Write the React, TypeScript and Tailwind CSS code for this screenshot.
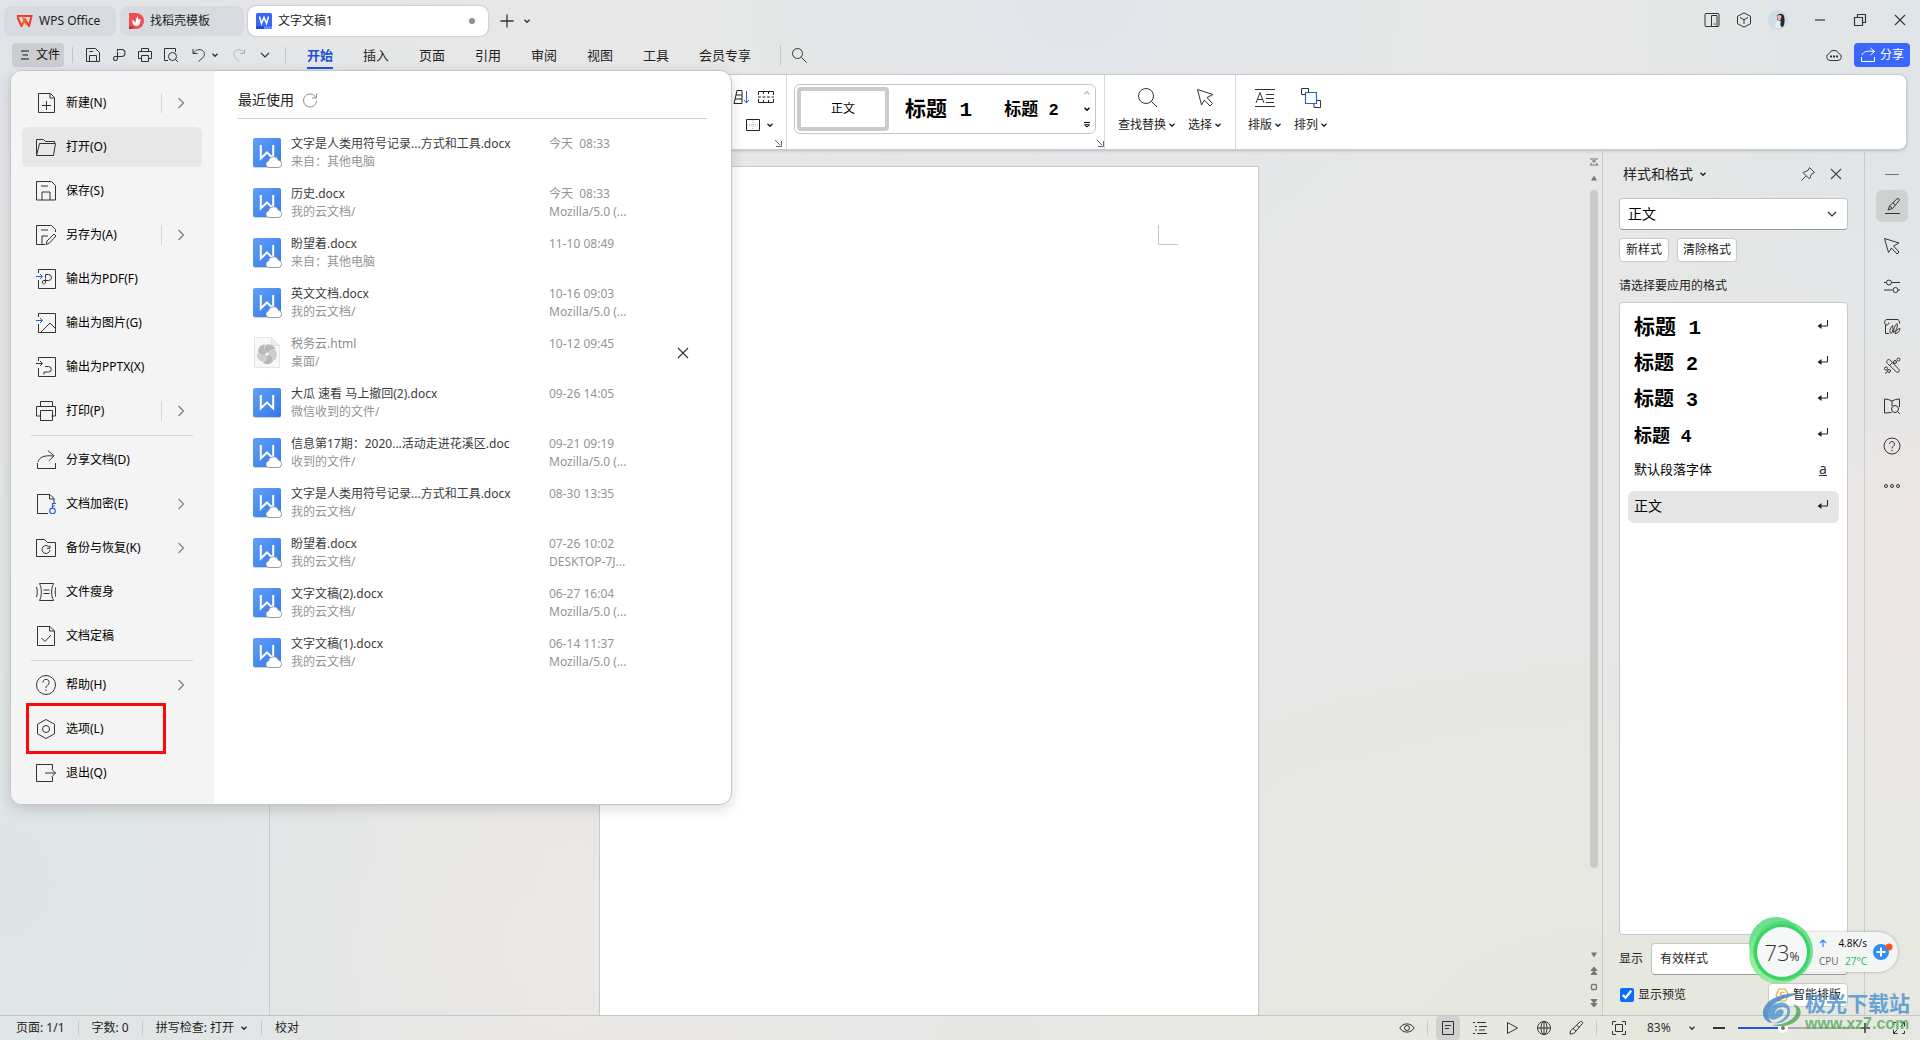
import type { ReactNode } from "react";
import clsx from "clsx";

function Ico({
  s = 20,
  className,
  children,
}: {
  s?: number;
  className?: string;
  children: ReactNode;
}) {
  return (
    <svg
      aria-hidden
      width={s}
      height={s}
      viewBox={`0 0 ${s} ${s}`}
      fill="none"
      stroke="currentColor"
      className={clsx("shrink-0", className)}
    >
      {children}
    </svg>
  );
}

const Caret = ({ className }: { className?: string }) => (
  <Ico s={8} className={className}>
    <path d="M1.5 2.8 4 5.2l2.5-2.4" strokeWidth="1.4" />
  </Ico>
);

const Close = () => (
  <Ico s={16}>
    <path d="m3 3 10 10M13 3 3 13" strokeWidth="1.1" />
  </Ico>
);

const icons = {
  newDoc: (
    <path d="M2.5.5h12l4 4v15h-16z M14 .5v4.5h4.5M10.5 8v9M6 12.5h9" />
  ),
  open: (
    <path d="M.5 18V2.5h7l2 2h9V7M3.5 6.5h16l-2 12h-17z" />
  ),
  save: <path d="M.5.5h15l4 4v14.500h-19zM5 5h7M6 19v-8h8v8" />,
  saveAs: (
    <path d="M9 19.500H.5V.5h15l4 4V7M5 5h7M6 19v-8h6M10 19.500l1-3.500 7-7 2 2-7 7.500z" />
  ),
  pdf: (
    <>
      <path d="M2.500 4V.5h17v19h-17V11" />
      <path d="M9.500 9.500v-4h3a3 3 0 0 1 0 6H8a1.700 1.700 0 1 0 1.500 2.500V10" />
      <path d="M0 7.500h6M4 5l2.500 2.500L4 10" stroke="#2a5de0" />
    </>
  ),
  picture: (
    <>
      <path d="M2.500 4V.5h17v19h-17V11M5 19l9-9 5.500 5.500" />
      <path d="M0 7.500h6M4 5l2.500 2.500L4 10" stroke="#2a5de0" />
    </>
  ),
  pptx: (
    <path d="M2.500 4V.5h17v19h-17V11M0 6.500h6M4 4l2.500 2.500L4 9M9 9.500h3.500a2.500 2.500 0 0 1 0 5.500H8v2.500" />
  ),
  print: (
    <path d="M4.500 5V.5h12V5M4.500 15H.5V5.500h19V15h-4M4.500 9.500h12v10h-12z" />
  ),
  share: <path d="M1.500 13v5.500h18V13M2 12c1-5 7-7 15-6M12 .8l6 5-5 5" />,
  encrypt: (
    <>
      <path d="M12 19.500H1.500V.5h12.500l4 4V9M13.500.5V5H18" />
      <g stroke="#2a5de0" strokeWidth="1.200">
        <circle cx="16.500" cy="17" r="2.800" />
        <path d="M16.500 14V9.500H20M16.500 12H19" />
      </g>
    </>
  ),
  backup: (
    <path d="M.5 18.500v-17h8l3 3h8v14zM13.500 9.500a4 4 0 1 0 .5 2.500M14 7.500v2.800h-3" />
  ),
  slim: (
    <path d="M3.500 1.500h14c-2.500 5-2.500 12 0 17h-14c2.500-5 2.500-12 0-17zM7.500 8h6M7.500 11.500h6M.5 5c1 3 1 7 0 10M20 5c-1 3-1 7 0 10" />
  ),
  final: (
    <path d="M1.500.5h12.500l4.500 4.500v14.500h-17zM13.500.5V5h5M5.500 12l3.500 3.500 6-6.500" />
  ),
  help: (
    <>
      <circle cx="10" cy="10" r="9.500" />
      <path d="M6.800 7.500a3.200 3.200 0 1 1 4.800 2.800c-1.100.6-1.600 1.200-1.600 2.700M10 14.500V16" />
    </>
  ),
  options: (
    <>
      <path d="m10 .5 8.500 4.700v9.600L10 19.500l-8.500-4.700V5.200z" />
      <circle cx="10" cy="10" r="3.500" />
    </>
  ),
  exit: <path d="M16.500 6V1.500H.5v17h16V14M9 10h10.500M15.500 6l4 4-4 4" />,
};

type MenuEntry = {
  icon: keyof typeof icons;
  label: string;
  arrow?: boolean;
  split?: boolean;
  active?: boolean;
  boxed?: boolean;
};

const menuGroups: MenuEntry[][] = [
  [
    { icon: "newDoc", label: "新建(N)", arrow: true, split: true },
    { icon: "open", label: "打开(O)", active: true },
    { icon: "save", label: "保存(S)" },
    { icon: "saveAs", label: "另存为(A)", arrow: true, split: true },
    { icon: "pdf", label: "输出为PDF(F)" },
    { icon: "picture", label: "输出为图片(G)" },
    { icon: "pptx", label: "输出为PPTX(X)" },
    { icon: "print", label: "打印(P)", arrow: true, split: true },
  ],
  [
    { icon: "share", label: "分享文档(D)" },
    { icon: "encrypt", label: "文档加密(E)", arrow: true },
    { icon: "backup", label: "备份与恢复(K)", arrow: true },
    { icon: "slim", label: "文件瘦身" },
    { icon: "final", label: "文档定稿" },
  ],
  [
    { icon: "help", label: "帮助(H)", arrow: true },
    { icon: "options", label: "选项(L)", boxed: true },
    { icon: "exit", label: "退出(Q)" },
  ],
];

const recent = [
  { name: "文字是人类用符号记录...方式和工具.docx", from: "来自：其他电脑", time: "今天  08:33", device: "" },
  { name: "历史.docx", from: "我的云文档/", time: "今天  08:33", device: "Mozilla/5.0 (..." },
  { name: "盼望着.docx", from: "来自：其他电脑", time: "11-10 08:49", device: "" },
  { name: "英文文档.docx", from: "我的云文档/", time: "10-16 09:03", device: "Mozilla/5.0 (..." },
  { name: "税务云.html", from: "桌面/", time: "10-12 09:45", device: "", kind: "html" },
  { name: "大瓜 速看 马上撤回(2).docx", from: "微信收到的文件/", time: "09-26 14:05", device: "", kind: "local" },
  { name: "信息第17期：2020...活动走进花溪区.doc", from: "收到的文件/", time: "09-21 09:19", device: "Mozilla/5.0 (..." },
  { name: "文字是人类用符号记录...方式和工具.docx", from: "我的云文档/", time: "08-30 13:35", device: "" },
  { name: "盼望着.docx", from: "我的云文档/", time: "07-26 10:02", device: "DESKTOP-7J..." },
  { name: "文字文稿(2).docx", from: "我的云文档/", time: "06-27 16:04", device: "Mozilla/5.0 (..." },
  { name: "文字文稿(1).docx", from: "我的云文档/", time: "06-14 11:37", device: "Mozilla/5.0 (..." },
];

function FileIcon({ kind }: { kind?: string }) {
  if (kind === "html") {
    return (
      <svg aria-hidden width="30" height="32" viewBox="0 0 30 32" className="shrink-0">
        <path d="M2.500.5h17l8 8v22h-25z" fill="#f8f8f8" stroke="#e6e6e6" />
        <path d="M19.500.5v8h8" fill="#ececec" stroke="#e2e2e2" />
        <circle cx="15" cy="17" r="9.500" fill="#e0e0e0" />
        {[0, 72, 144, 216, 288].map((a) => (
          <path
            key={a}
            d="M15 17c-3-3-3-7 0-9.500 4-.5 7 1 8.500 4.500-3 0-6 1-8.500 5z"
            fill={a % 144 === 0 ? "#b9b9b9" : "#cdcdcd"}
            transform={`rotate(${a} 15 17)`}
          />
        ))}
        <circle cx="15" cy="17" r="1.500" fill="#fff" />
      </svg>
    );
  }
  return (
    <svg aria-hidden width="30" height="32" viewBox="0 0 30 32" className="shrink-0">
      <defs>
        <linearGradient id="doc" x1="0" y1="0" x2="1" y2="1">
          <stop offset="0" stopColor="#639ef8" />
          <stop offset="1" stopColor="#2f7ae8" />
        </linearGradient>
      </defs>
      <rect x="1" y="2" width="28" height="29" rx="2" fill="#cfd3da" />
      <rect x="1" y="1" width="28" height="29" rx="2" fill="url(#doc)" />
      <path d="M8.800 8v13.500L15 15.500l6.200 6V8" fill="none" stroke="#fff" strokeWidth="2" />
      {kind !== "local" && (
        <path
          d="M17 30.500a3.300 3.300 0 0 1-.6-6.500 5.200 5.200 0 0 1 10-.8 3.700 3.700 0 0 1 .3 7.300z"
          fill="#fff"
          stroke="#8f959e"
          strokeWidth=".9"
        />
      )}
    </svg>
  );
}

function FileMenu() {
  return (
    <div className="absolute left-2.5 top-[70px] z-20 flex overflow-hidden rounded-xl border border-[#c3c5c9] bg-white shadow-[0_4px_14px_rgba(0,0,0,0.14)]">
      <nav className="flex w-[203px] flex-col gap-1 bg-[#f4f4f4] pb-[11px] pl-[11px] pr-3 pt-3">
        {menuGroups.map((group, gi) => (
          <div key={gi} className="flex flex-col gap-1">
            {gi > 0 && <hr className="mx-[9px] border-[#d5d5d5]" />}
            {group.map((m) => (
              <button
                key={m.label}
                className={clsx(
                  "relative flex h-10 items-center rounded-md pl-3.5 pr-[13px] text-xs text-black",
                  m.active && "bg-[#e7e7e7]",
                )}
              >
                <Ico className="mr-2.5 text-[#333]">{icons[m.icon]}</Ico>
                <span>{m.label}</span>
                {m.arrow && (
                  <span className="ml-auto flex items-center gap-[11px]">
                    {m.split && <span className="h-5 w-px bg-[#d5d5d5]" />}
                    <Ico s={16} className="text-[#808080]">
                      <path d="m5.500 3 5 5-5 5" strokeWidth="1.300" />
                    </Ico>
                  </span>
                )}
                {m.boxed && (
                  <span className="absolute -top-1.5 left-1 h-[51px] w-[140px] border-3 border-[#f80a0a]" />
                )}
              </button>
            ))}
          </div>
        ))}
      </nav>

      <section className="w-[517px] px-6">
        <header className="flex h-12 items-center gap-2 border-b border-[#d0d0d0] pt-2.5">
          <h2 className="text-sm text-[#222]">最近使用</h2>
          <button aria-label="刷新">
            <Ico s={16} className="text-[#8a8a8a]">
              <path d="M13.800 5.500A6.500 6.500 0 1 0 14.500 9M14.500 1.500v4.500H10" />
            </Ico>
          </button>
        </header>
        <ul className="pt-[9px]">
          {recent.map((f, i) => (
            <li key={i} className="flex h-[50px] items-center pl-3.5 text-xs leading-[18px]">
              <FileIcon kind={f.kind} />
              <div className="ml-[9px] w-[258px]">
                <div className={f.kind === "html" ? "text-[#8c8c8c]" : "text-[#3c3c3c]"}>{f.name}</div>
                <div className="text-[#949494]">{f.from}</div>
              </div>
              <div className="h-9 whitespace-pre text-[#949494]">
                <div>{f.time}</div>
                <div>{f.device}</div>
              </div>
              {f.kind === "html" && (
                <button aria-label="移除" className="ml-auto mr-4 text-[#333]">
                  <Close />
                </button>
              )}
            </li>
          ))}
        </ul>
      </section>
    </div>
  );
}

function TitleBar() {
  return (
    <header className="flex h-9 items-end pl-1 text-xs text-[#222]">
      <button className="flex h-[30px] w-28 items-center gap-1.5 rounded-lg bg-[#d7dade] pl-[13px]">
        <svg aria-hidden width="16" height="12" viewBox="0 0 16 12">
          <path d="M0 1h14.500L12 11 8 4.500 4.500 11z" fill="none" stroke="#f0382c" strokeWidth="2" />
          <path d="M5 1l4.500 9M8 5l-3 5.500" fill="none" stroke="#ff6a2b" strokeWidth="1.500" />
        </svg>
        WPS Office
      </button>
      <button className="ml-1 flex h-[30px] w-31 items-center gap-1.5 rounded-lg bg-[#d7dade] pl-[9px]">
        <svg aria-hidden width="15" height="16" viewBox="0 0 15 16">
          <path d="M0 0h7a8 8 0 0 1 0 16H0z" fill="#ee4f52" />
          <path d="M0 13.500h5L3 16H0z" fill="#c22f36" />
          <path d="M7.500 13C3.500 12.500 3 9 3.500 7c1.500.5 2.500 1.500 3 3 0-3 1-5 2-7 .8 1.500.8 2.500.5 3.500l2.500-.5c0 3.500-.5 6.500-4 7z" fill="#fff" />
        </svg>
        找稻壳模板
      </button>
      <button className="ml-1 flex h-[30px] w-60 items-center gap-1.5 rounded-lg bg-white pl-2 shadow-[0_0_2px_rgba(0,0,0,0.35)]">
        <svg aria-hidden width="16" height="16" viewBox="0 0 16 16">
          <rect width="16" height="16" rx="1.500" fill="#3a66f5" />
          <path d="M0 13.500h8V16H0z" fill="#1d4bd6" />
          <path d="M8 13.500h8V16H8z" fill="#5f8cff" />
          <path d="m3.500 3.500 2 7L8 4.500l2.500 6 2-7" fill="none" stroke="#fff" strokeWidth="1.500" />
        </svg>
        文字文稿1
        <span className="ml-auto mr-[13px] size-1.5 rounded-full bg-[#8f8f8f]" />
      </button>
      <button aria-label="新建标签" className="ml-2.5 flex h-[30px] items-center text-[#333]">
        <Ico s={18}>
          <path d="M9 2.500v13M2.500 9h13" strokeWidth="1.300" />
        </Ico>
      </button>
      <button aria-label="标签列表" className="ml-[7px] flex h-[30px] items-center text-[#333]">
        <Caret />
      </button>

      <div className="mb-1.5 ml-auto mr-3 flex items-center text-[#333]">
        <button aria-label="分栏视图" className="mr-4">
          <Ico s={16}>
            <rect x="1" y="1.500" width="14" height="13" rx="1" />
            <path d="M7.500 14.500v-11h5.500v11M9.500 12h2" />
          </Ico>
        </button>
        <button aria-label="应用中心" className="mr-4">
          <Ico s={16}>
            <path d="m8 .8 6.500 3.500v7.400L8 15.200l-6.500-3.500V4.300zM4 5.500l4 2.200 4-2.200M8 7.700V12" />
          </Ico>
        </button>
        <button aria-label="账号" className="mr-6">
          <svg aria-hidden width="20" height="20" viewBox="0 0 20 20">
            <circle cx="10" cy="10" r="10" fill="#cbdde8" />
            <path d="M9 6c1-3 6-3 7 0 .8 3 1 8-1 11l-3-1 1-5-4-1z" fill="#2c2630" />
            <path d="M9 6.500c1-2 4-2 4.500 0L12.500 10 10 11z" fill="#e8b7a6" />
            <path d="M7 17c0-3 1-6 4-6l2 6c-2 1.500-4 1.500-6 0z" fill="#e9f1f5" />
          </svg>
        </button>
        <button aria-label="最小化" className="mr-6">
          <Ico s={16}>
            <path d="M3 8h10" strokeWidth="1.200" />
          </Ico>
        </button>
        <button aria-label="还原" className="mr-6">
          <Ico s={16}>
            <path d="M2.500 5.500h8v8h-8zM5.500 5V2.500h8v8H11" strokeWidth="1.200" />
          </Ico>
        </button>
        <button aria-label="关闭">
          <Close />
        </button>
      </div>
    </header>
  );
}

const tabs = ["开始", "插入", "页面", "引用", "审阅", "视图", "工具", "会员专享"];

function MenuBar() {
  return (
    <div className="flex h-[38px] items-center pl-3 pr-2.5 text-[#333]">
      <button className="flex h-6 w-13 items-center gap-1.5 rounded-sm bg-[#cbcdd0] pl-2 text-xs text-[#111]">
        <Ico s={10}>
          <path d="M1 1h8M2.500 5H8M1 9h8" />
        </Ico>
        文件
      </button>
      <span className="ml-2 h-4 w-px bg-[#c3c5c8]" />
      <div className="ml-3 flex items-center gap-2.5">
        <button aria-label="保存">
          <Ico s={16}>
            <path d="M1.500 1.500h9l4 4v9h-13zM4.500 14V8.500h7V14M4.500 4.500H8" />
          </Ico>
        </button>
        <button aria-label="输出为PDF">
          <Ico s={16}>
            <path d="M6.500 4.500v-2h4a3.500 3.500 0 0 1 0 7H4.500a2 2 0 1 0 2 2.200V5" strokeWidth="1.100" />
          </Ico>
        </button>
        <button aria-label="打印">
          <Ico s={16}>
            <path d="M4.500 4.500v-3h7v3M4 11.500H1.500v-7h13v7H12M4.500 8.500h7v6h-7z" />
          </Ico>
        </button>
        <button aria-label="打印预览">
          <Ico s={16}>
            <path d="M5 13.500H1.500v-12h11V5M12.500 12.500l2.500 2.500" />
            <circle cx="9.500" cy="9.500" r="4" />
          </Ico>
        </button>
      </div>
      <button aria-label="撤销" className="ml-3">
        <Ico s={16}>
          <path d="M2 2v4.500h4.500M2.500 6c2-3 6-4.500 9-2.500 3 2.500 2 5.500 0 7.500l-4 3.500" />
        </Ico>
      </button>
      <Caret className="ml-1" />
      <button aria-label="恢复" className="ml-3 text-[#b0b2b6]">
        <Ico s={16}>
          <path d="M13.500 2v4.500H9M13 6C11 3 7.500 2 5 3.500c-3 2-2.500 5.500 0 8L8 14.500" />
        </Ico>
      </button>
      <button aria-label="更多" className="ml-3">
        <Ico s={12}>
          <path d="m2 4 4 4 4-4" strokeWidth="1.100" />
        </Ico>
      </button>
      <span className="ml-3.5 h-4 w-px bg-[#c3c5c8]" />
      <nav className="ml-[21px] flex gap-[30px] text-[13px] leading-5 text-[#222]">
        {tabs.map((t, i) => (
          <button
            key={t}
            className={clsx(
              "border-b-2 pb-0.5 pt-1",
              i === 0 ? "border-[#1f50d8] font-bold text-[#1f50d8]" : "border-transparent",
            )}
          >
            {t}
          </button>
        ))}
      </nav>
      <span className="ml-[29px] h-5 w-px bg-[#c3c5c8]" />
      <button aria-label="搜索" className="ml-2.5">
        <Ico s={16}>
          <circle cx="6.500" cy="6.500" r="5" />
          <path d="m10.500 10.500 5 5" />
        </Ico>
      </button>
      <button aria-label="云状态" className="ml-auto mr-3">
        <Ico s={16}>
          <path d="M4 13.500a3.600 3.600 0 0 1-.8-7 5.200 5.200 0 0 1 9.600 0 3.600 3.600 0 0 1-.8 7z" />
          <path d="M4 9.500h2M7 9.500h2M10 9.500h2" strokeWidth="1.800" />
        </Ico>
      </button>
      <button className="flex h-6 w-14 items-center gap-1 rounded-sm bg-[#3a66fb] pl-1.5 text-xs text-white">
        <Ico s={16}>
          <path d="M1.500 10v4.500h13V10M2 8c1-3.500 6-4.500 12-3.500M10.500 1l4 3.500-4 3.500" />
        </Ico>
        分享
      </button>
    </div>
  );
}

const Launcher = () => (
  <Ico s={8} className="text-[#666]">
    <path d="M1 1l5 5M7.500 2v5.500H2" />
  </Ico>
);

function BigButton({ label, children }: { label: string; children: ReactNode }) {
  return (
    <button className="flex flex-col items-center gap-2 pb-1">
      <Ico s={22} className="text-[#333]">
        {children}
      </Ico>
      <span className="flex items-center gap-0.5 whitespace-nowrap text-xs leading-4">
        {label}
        <Caret />
      </span>
    </button>
  );
}

function Ribbon() {
  return (
    <div className="ml-[11px] mr-[13px] flex h-[76px] shrink-0 overflow-hidden rounded-lg border border-[#cbccce] bg-white text-[#222] shadow-[0_1px_3px_rgba(0,0,0,0.18)]">
      <div className="flex w-[775px] justify-end border-r border-[#d8d8d8]">
        <div className="flex flex-col justify-center gap-3 pb-4 pt-3">
          <div className="flex gap-2">
            <button aria-label="中文版式">
              <Ico s={18}>
                <path d="M2 15.500 5 2.500h5v13H2M4 7h6M3 11h7" />
                <path d="M14.500 3v12M12 12l2.500 3 2.500-3" stroke="#2a5de0" />
              </Ico>
            </button>
            <button aria-label="显示编辑标记">
              <Ico s={16}>
                <path d="M.5 6V2.500h4.500M11 2.500h4.500V6M.5 10v3.500h4.500M11 13.500h4.500V10M5.500 2v3M10.500 2v3M5.500 11v3M10.500 11v3M5.500 2.500h5M5.500 13.500h5M0 8h3M4.500 8h3M9 8h3M13.500 8H16" />
              </Ico>
            </button>
          </div>
          <button aria-label="边框" className="flex items-center gap-1.5 pl-3.5">
            <Ico s={14}>
              <path d="M.5 1.500h13v11H.5z" />
              <path d="M7 2v10M1 7h12" stroke="#aaa" strokeDasharray="1 1" />
            </Ico>
            <Caret />
          </button>
        </div>
        <div className="flex items-end pb-0.5 pr-1">
          <Launcher />
        </div>
      </div>

      <div className="ml-[7px] mt-[9px] flex h-[50px] w-[302px] items-center rounded-md border border-[#c6c6c6] pl-0.5 text-black">
        <button className="h-11 w-[92px] rounded-sm border-4 border-[#cbcbcb] text-xs">正文</button>
        <button className="ml-4 whitespace-pre pt-1 font-['Liberation_Mono','Noto_Sans_CJK_SC',monospace] text-[21px] font-bold leading-8">
          标题 1
        </button>
        <button className="ml-8 whitespace-pre pt-1 font-['Liberation_Mono','Noto_Sans_CJK_SC',monospace] text-[17px] font-bold leading-8">
          标题 2
        </button>
        <div className="ml-auto mr-1 flex flex-col items-center gap-2">
          <Caret className="rotate-180 text-[#bbb]" />
          <Caret />
          <Ico s={8}>
            <path d="M1 1.500h6M1.500 3.800 4 6l2.500-2.200z" />
          </Ico>
        </div>
      </div>
      <div className="flex items-end border-r border-[#d8d8d8] pb-0.5">
        <Launcher />
      </div>

      <div className="flex w-[131px] items-center justify-center gap-3 border-r border-[#d8d8d8]">
        <BigButton label="查找替换">
          <circle cx="10" cy="9" r="7.500" />
          <path d="m15.500 14.500 5.500 5.500" />
        </BigButton>
        <BigButton label="选择">
          <path d="M3.500 2.500 19 7.500l-6 3 5.500 6-2.500 2.500-5.500-6-3 5z" />
        </BigButton>
      </div>
      <div className="flex items-center gap-3 pl-3">
        <BigButton label="排版">
          <path d="M1 2.500h20M12 7.500h8M12 11.500h8M12 15.500h8M1 19.500h20M2 16l4-10.500L10 16M3.500 12.500h5" />
        </BigButton>
        <BigButton label="排列">
          <path d="M5.500 7.500H1.500v-6h7V5M14 17v3.500h6.500v-7H17" />
          <path d="M5.500 5.500h11v11h-11z" stroke="#2a5de0" strokeWidth="1.200" />
        </BigButton>
      </div>
    </div>
  );
}

const styleList = [
  { name: "标题 1", cls: "pt-1 text-[21px] leading-7 font-bold" },
  { name: "标题 2", cls: "pt-1 text-xl leading-7 font-bold" },
  { name: "标题 3", cls: "pt-1 text-xl leading-7 font-bold" },
  { name: "标题 4", cls: "pt-1 text-lg leading-7 font-bold" },
  { name: "默认段落字体", cls: "text-[13px] leading-8", char: true },
  { name: "正文", cls: "text-sm leading-8", active: true },
];

function StylePanel() {
  return (
    <aside className="flex w-[262px] shrink-0 flex-col border-l border-[#c9cbcc] px-4 pb-2 pt-3 text-xs text-[#222]">
      <div className="flex h-6 items-center pl-1">
        <h2 className="text-sm">样式和格式</h2>
        <Caret className="ml-1.5" />
        <button aria-label="固定" className="ml-auto mr-3 text-[#444]">
          <Ico s={16}>
            <path d="M9.500 1.500 14.500 6.500 11.500 8 9.500 13 3 6.500 8 4.500zM6 10l-4.500 4.500" />
          </Ico>
        </button>
        <button aria-label="关闭面板" className="mr-1 text-[#444]">
          <Close />
        </button>
      </div>
      <div className="relative mt-3 text-black">
        <select
          aria-label="当前样式"
          className="h-8 w-full appearance-none rounded-sm border border-[#c4c4c4] border-b-[#9a9a9a] bg-white pl-2 text-sm"
        >
          <option>正文</option>
        </select>
        <Ico s={12} className="pointer-events-none absolute right-2.5 top-2.5 text-[#333]">
          <path d="m2 4 4 4 4-4" strokeWidth="1.200" />
        </Ico>
      </div>
      <div className="mt-2 flex gap-2">
        <button className="h-6 rounded-sm border border-[#c9c9c9] bg-white px-1.5">新样式</button>
        <button className="h-6 rounded-sm border border-[#c9c9c9] bg-white px-[5px]">清除格式</button>
      </div>
      <p className="mt-4 leading-4">请选择要应用的格式</p>
      <ul className="mt-2 flex flex-1 flex-col gap-1 rounded-sm border border-[#c9c9c9] bg-white p-2 text-black">
        {styleList.map((s) => (
          <li key={s.name}>
            <button
              className={clsx(
                "flex h-8 w-full items-center justify-between rounded-md pl-1.5 pr-2.5",
                s.active && "bg-[#e5e5e5]",
              )}
            >
              <span
                className={clsx(
                  "whitespace-pre font-['Liberation_Mono','Noto_Sans_CJK_SC',monospace]",
                  s.cls,
                )}
              >
                {s.name}
              </span>
              {s.char ? (
                <span className="mb-1 w-3 text-center text-sm leading-4 text-[#333] underline">a</span>
              ) : (
                <Ico s={12} className="mb-1 text-[#222]">
                  <path d="M10.500 1v6H2" />
                  <path d="M4.500 4v6L.5 7z" fill="currentColor" stroke="none" />
                </Ico>
              )}
            </button>
          </li>
        ))}
      </ul>
      <div className="mt-2 flex items-center gap-2">
        <label htmlFor="show" className="whitespace-nowrap">
          显示
        </label>
        <select
          id="show"
          className="h-8 w-full appearance-none rounded-sm border border-[#c4c4c4] border-b-[#9a9a9a] bg-white pl-2"
        >
          <option>有效样式</option>
        </select>
      </div>
      <div className="mt-2 flex h-6 items-center">
        <input id="preview" type="checkbox" defaultChecked className="ml-px size-3.5 accent-[#0a6cff]" />
        <label htmlFor="preview" className="ml-1">
          显示预览
        </label>
        <button className="ml-auto flex h-6 items-center gap-1 rounded-sm border border-[#c9c9c9] bg-white px-1.5">
          <Ico s={14} className="text-[#f0a030]">
            <path d="M4 1h6.500l3 6-3 6H4L1 7zM9.500 4.500c-5-1-5 2-2.500 2.500s3 3.500-2.500 2.500" strokeWidth="1.200" />
          </Ico>
          智能排版
        </button>
      </div>
    </aside>
  );
}

const stripTools: { label: string; art: ReactNode; active?: boolean }[] = [
  {
    label: "样式",
    active: true,
    art: <path d="M2 16.500h15M5 13l1.500-4L14 1.800c1.500-.8 3 .7 2 2L9.500 11.500 5 13zM6.500 9l3 2.500M10 6l2.500 2" />,
  },
  { label: "选择", art: <path d="M1.500 1.500 16 6l-5.500 3 5.500 6-2 2-5.500-6-3 4.500z" /> },
  {
    label: "属性",
    art: (
      <>
        <path d="M1 5.500h2.500M8.500 5.500H17M1 13h8.500M15 13h2" />
        <circle cx="6" cy="5.500" r="2.500" />
        <circle cx="12.500" cy="13" r="2.500" />
      </>
    ),
  },
  {
    label: "素材",
    art: (
      <path d="M6 16.500H2.500v-9C1 6 1.500 2.500 4 2.500h10c1.800 0 3 1.500 2.500 4M2.500 7.500C4 8.500 6 7.500 6 5.500M8 16.500c-2-2-1-5 1.500-8 1 3 .5 6-1.500 8zM10.500 15.500c0-3 1-7 3.500-9 1 3-.5 7-3.500 9zM12 16.500c.5-2.500 2.500-4.500 5-5-.5 3-2 5-5 5z" />
    ),
  },
  {
    label: "工具箱",
    art: (
      <>
        <path d="M4 3.500c1-1.500 2.500-1 3.500 0l8.500 9c1 1.500-.5 3.500-2.500 2.500L4.500 6.500c-1-1-1-2-.5-3zM6.500 8.500l3-3" />
        <circle cx="12" cy="5" r="1.500" />
        <circle cx="15.500" cy="2.500" r="1.500" />
        <circle cx="3" cy="11.500" r="1.500" />
        <circle cx="6" cy="14" r="1.500" />
        <path d="m2 16.500 2-1.500" />
      </>
    ),
  },
  {
    label: "查找",
    art: (
      <>
        <path d="M8.500 15.500 1.500 16V2l4 .5L9 4l3.500-1.500 4-.5v8M9 4v5" />
        <circle cx="12" cy="12" r="3.500" />
        <path d="m14.500 14.500 2.500 2.500" />
      </>
    ),
  },
  {
    label: "帮助",
    art: (
      <>
        <circle cx="9" cy="9" r="8" />
        <path d="M6.500 7a2.500 2.500 0 1 1 3.800 2.200C9.400 9.700 9 10.200 9 11.300M9 12.800v1.400" />
      </>
    ),
  },
  {
    label: "更多",
    art: (
      <>
        <circle cx="3" cy="9" r="1.500" />
        <circle cx="9" cy="9" r="1.500" />
        <circle cx="15" cy="9" r="1.500" />
      </>
    ),
  },
];

function ToolStrip() {
  return (
    <div className="flex w-14 shrink-0 flex-col items-center gap-2 border-l border-[#c9cbcc] pr-0.5 pt-2.5 text-[#333]">
      <button aria-label="收起" className="-mb-1.5 flex h-7 items-center">
        <span className="h-px w-3.5 bg-[#777]" />
      </button>
      {stripTools.map((t) => (
        <button
          key={t.label}
          aria-label={t.label}
          className={clsx(
            "flex size-8 items-center justify-center rounded-md",
            t.active && "bg-[#cfd1d1]",
          )}
        >
          <Ico s={18}>{t.art}</Ico>
        </button>
      ))}
    </div>
  );
}

function Workspace() {
  return (
    <main className="flex min-h-0 flex-1">
      <div className="w-[270px] shrink-0 border-r border-[#c9cccd]" />
      <div className="flex min-w-0 flex-1">
        <div className="flex flex-1 justify-center pl-0.5 pt-4">
          <div className="flex w-[660px] justify-end border border-b-0 border-[#c9c9c9] bg-white">
            <span className="mr-20 mt-[58px] size-5 border-b border-l border-[#c6c6c6]" />
          </div>
        </div>
        <div className="flex w-4 flex-col items-center gap-2 pb-2 pt-2 text-[#777]">
          <Ico s={8}>
            <path d="M0 1h8M2 3h4M4 2v3M0 7h8M1 5v2M7 5v2" />
          </Ico>
          <Ico s={8}>
            <path d="M4 1.500 7 6.500H1z" fill="currentColor" stroke="none" />
          </Ico>
          <span className="h-[678px] w-2 rounded-full bg-[#c9cbc9]" />
          <Ico s={8} className="mt-auto">
            <path d="M4 6.500 7 1.500H1z" fill="currentColor" stroke="none" />
          </Ico>
          <Ico s={8}>
            <path d="M4 0l3 3.500H1zM4 4l3 3.500H1z" fill="currentColor" />
          </Ico>
          <Ico s={8}>
            <rect x="1.500" y="1.500" width="5" height="5" rx="1" strokeWidth="1.400" />
          </Ico>
          <Ico s={8}>
            <path d="M4 4l3-3.500H1zM4 8l3-3.500H1z" fill="currentColor" />
          </Ico>
        </div>
      </div>
      <StylePanel />
      <ToolStrip />
    </main>
  );
}

const Sep = () => <span className="mx-3 h-3.5 w-px bg-[#c5c8c9]" />;

function StatusBar() {
  return (
    <footer className="flex h-[25px] shrink-0 items-center border-t border-[#c3c6c7] pl-4 pr-3.5 text-xs text-[#222]">
      <div className="flex items-center gap-px">
        <span>页面: 1/1</span>
        <Sep />
        <span>字数: 0</span>
        <Sep />
        <button className="flex items-center gap-1.5">
          拼写检查: 打开 <Caret />
        </button>
        <Sep />
        <button>校对</button>
      </div>

      <div className="ml-auto flex items-center text-[#333]">
        <button aria-label="护眼模式">
          <Ico s={16}>
            <path d="M.8 8C4 2.500 12 2.500 15.200 8 12 13.500 4 13.500.8 8z" />
            <circle cx="8" cy="8" r="2.500" />
          </Ico>
        </button>
        <Sep />
        <button aria-label="页面视图" className="-ml-1 flex size-6 items-center justify-center rounded-sm bg-[#d0d1ce]">
          <Ico s={14}>
            <path d="M1.500.5h11v13h-11zM4 4.500h6M4 7.500h4" />
          </Ico>
        </button>
        <button aria-label="大纲" className="ml-3">
          <Ico s={16}>
            <path d="M1 2.500h2M5 2.500h9M3 6.500h2M7 6.500h8M3 10h2M7 10h6M1 13.500h2M5 13.500h10" />
          </Ico>
        </button>
        <button aria-label="阅读版式" className="ml-4">
          <Ico s={16}>
            <path d="M3.500 2.500 13.500 8l-10 5.500z" />
          </Ico>
        </button>
        <button aria-label="Web版式" className="ml-4">
          <Ico s={16}>
            <circle cx="8" cy="8" r="6.500" />
            <ellipse cx="8" cy="8" rx="3" ry="6.500" />
            <path d="M1.500 8h13M8 1.500v13" />
          </Ico>
        </button>
        <button aria-label="写作模式" className="ml-4">
          <Ico s={16}>
            <path d="M2 14c0-3 1-4.500 3-5.500l7.500-7c1.500-.5 2.500.8 2 2L8 11c-1 2-3 3-6 3zM5 8.500 8 11M8.500 5l3 3" />
          </Ico>
        </button>
        <Sep />
        <button aria-label="最佳比例" className="ml-0.5">
          <Ico s={16}>
            <path d="M1.500 5V1.500H5M11 1.500h3.500V5M14.500 11v3.500H11M5 14.500H1.500V11M4.500 4.500h7v7h-7z" />
          </Ico>
        </button>
        <button className="ml-5 flex w-[49px] items-center justify-between">
          83% <Caret />
        </button>
        <button aria-label="缩小" className="ml-4">
          <Ico s={14}>
            <path d="M1 7h12" strokeWidth="2" />
          </Ico>
        </button>
        <input
          aria-label="缩放"
          type="range"
          min={0}
          max={100}
          defaultValue={36}
          className="ml-3 h-0.5 w-[120px] appearance-none bg-linear-to-r from-[#2455e0] from-36% to-[#a8aaa8] to-36% [&::-webkit-slider-thumb]:size-2.5 [&::-webkit-slider-thumb]:appearance-none [&::-webkit-slider-thumb]:rounded-full [&::-webkit-slider-thumb]:border-3 [&::-webkit-slider-thumb]:border-white [&::-webkit-slider-thumb]:bg-[#777]"
        />
        <button aria-label="放大">
          <Ico s={14}>
            <path d="M2 7h10M7 2v10" strokeWidth="1.500" />
          </Ico>
        </button>
        <button aria-label="全屏" className="ml-5">
          <Ico s={14}>
            <path d="M8.500 1.500h4v4M12.500 1.500 8.500 5.500M1.500 8.500v4h4M1.500 12.500l4-4M1.500 4V1.500H4M12.500 10v2.500H10" />
          </Ico>
        </button>
      </div>
    </footer>
  );
}

// Floating system monitor
function Monitor() {
  return (
    <div className="absolute bottom-14 right-[22px] z-30 flex items-center">
      <div className="relative z-10 -mr-8 flex size-16 items-center justify-center">
        <svg aria-hidden width="66" height="70" viewBox="0 0 66 70" className="absolute -left-0.5 -top-1">
          <circle cx="28" cy="28" r="27" fill="#6fdf92" />
          <circle cx="31" cy="38" r="30" fill="#86ea8f" opacity=".85" />
          <circle cx="35" cy="35" r="30" fill="#4fd873" opacity=".8" />
          <circle cx="34" cy="36" r="28" fill="#37d565" />
          <circle cx="34" cy="36" r="25" fill="#f6f7f7" />
        </svg>
        <span className="relative flex items-baseline font-['Open_Sans','Noto_Sans',sans-serif] text-[#333]">
          <span className="text-[22px] font-light leading-6">73</span>
          <span className="text-xs">%</span>
        </span>
      </div>
      <div className="flex h-10 w-[116px] items-center rounded-r-full bg-[#f3f4f4] pl-[37px] shadow-[0_0_3px_rgba(0,0,0,0.3)]">
        <div className="w-12 font-['Open_Sans','Noto_Sans',sans-serif] text-[10px] leading-[18px]">
          <div className="flex items-center justify-between text-black">
            <Ico s={8} className="text-[#2d8cf5]">
              <path d="M4 8V1M1 4l3-3 3 3" strokeWidth="1.200" />
            </Ico>
            4.8K/s
          </div>
          <div className="flex justify-between text-[#666]">
            CPU <span className="text-[#12c250]">27°C</span>
          </div>
        </div>
        <svg aria-hidden width="22" height="20" viewBox="0 0 22 20" className="ml-[5px]">
          <circle cx="9" cy="10" r="8" fill="#2d8cf5" />
          <path d="M4.500 10h9M9 5.500v9" stroke="#fff" strokeWidth="2" />
          <circle cx="17" cy="5" r="3.500" fill="#f4502e" />
        </svg>
      </div>
    </div>
  );
}

// Site mark in the lower right corner
function SiteMark() {
  return (
    <div className="pointer-events-none absolute bottom-2 right-2.5 z-40 flex items-center opacity-80">
      <svg aria-hidden width="44" height="36" viewBox="0 0 44 36">
        <path d="M43 1C25 0 5 5 2 19c-1 7 4 12 10 12C5 27 6 16 16 10 23 6 33 3 43 1z" fill="#3f82c4" />
        <path d="M24 11c-8-2-16 3-17 10-1 5 4 8 8 6 6-2 9-6 7-9-2-2-7 0-8 4-1-6 9-9 12-5 2 6-6 14-14 14 9 2 18-5 17-13-.5-4-3-6-5-7z" fill="#4d94cf" />
        <path d="M32 12c8 2 10 9 5 15-6 7-17 9-26 6 12 0 22-5 24-12 1-4-1-7-3-9z" fill="#4ba857" />
      </svg>
      <div>
        <div className="font-['Noto_Sans_CJK_SC',sans-serif] text-[21px] font-bold leading-7 text-[#4a90cf]">
          极光下载站
        </div>
        <div className="font-['Liberation_Sans',sans-serif] text-base font-bold leading-4 text-[#55ad5e]">
          www.xz7.com
        </div>
      </div>
    </div>
  );
}

export default function App() {
  return (
    <div className="relative flex h-screen min-h-[860px] flex-col overflow-hidden bg-[#e6e7e6] bg-[radial-gradient(ellipse_30%_60%_at_0%_85%,#dee4e6,transparent),radial-gradient(ellipse_25%_40%_at_0%_0%,#e0e3e9,transparent),radial-gradient(ellipse_20%_30%_at_56%_0%,#e1e4ea,transparent),radial-gradient(ellipse_16%_50%_at_100%_0%,#dfe4e8,transparent),radial-gradient(ellipse_10%_30%_at_100%_55%,#ece5e3,transparent),radial-gradient(ellipse_40%_40%_at_85%_100%,#e6e8de,transparent),radial-gradient(ellipse_20%_30%_at_27%_90%,#ece8e5,transparent)] font-['Noto_Sans','Noto_Sans_CJK_SC',sans-serif]">
      <TitleBar />
      <MenuBar />
      <Ribbon />
      <Workspace />
      <StatusBar />
      <FileMenu />
      <Monitor />
      <SiteMark />
    </div>
  );
}
